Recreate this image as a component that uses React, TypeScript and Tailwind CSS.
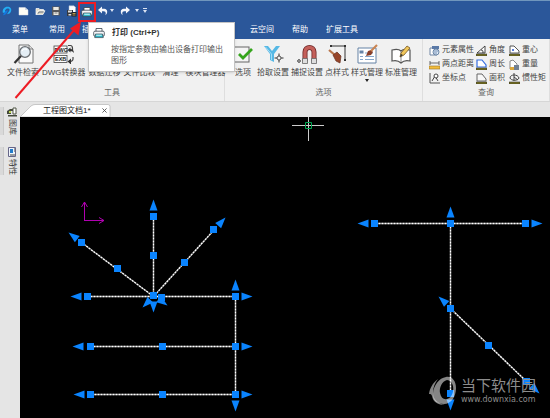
import React from "react";

type Pt = [number, number];

function Print({ className }: { className: string }) {
  return (
    <svg viewBox="0 0 12 12" className={className} aria-hidden="true">
      <path d="M3 5V1.500h6V5" fill="#fff" stroke="#39424c" strokeWidth=".8" />
      <rect x=".7" y="4.200" width="10.600" height="5" rx="1.200" fill="#f5f7fa" stroke="#39424c" strokeWidth=".8" />
      <path d="M2.500 7h7l.8 3.600H1.700z" fill="#2fb5c6" stroke="#39424c" strokeWidth=".7" />
      <path d="M3.200 8.200h5.600" stroke="#dff" strokeWidth="1" />
    </svg>
  );
}

function Undo({ flip = false }: { flip?: boolean }) {
  return (
    <svg viewBox="0 0 10 10" className={flip ? "h-2.5 w-2.5 -scale-x-100" : "h-2.5 w-2.5"} aria-hidden="true">
      <path d="M0 4 4 .6v2.200h2.200c3.600 0 4 4.600 1 6.400 1-2 .6-4-1.400-4H4v2.200z" fill="#f4f6fb" />
    </svg>
  );
}

function Caret() {
  return (
    <svg viewBox="0 0 4 3" className="h-[3px] w-1" aria-hidden="true">
      <path d="M0 0h4L2 3z" fill="#dbe4f3" />
    </svg>
  );
}

function QuickButton({ label, width, children }: { label: string; width: string; children: React.ReactNode }) {
  return (
    <button type="button" aria-label={label} className={`flex h-4 shrink-0 items-center justify-center ${width}`}>
      {children}
    </button>
  );
}

function QuickBar() {
  return (
    <div className="flex h-5 items-center border-t border-[#7096bd]">
      <QuickButton label="CAD" width="w-3.5">
        <svg viewBox="0 0 12 12" className="h-2.5 w-2.5" aria-hidden="true">
          <path d="M1 8C0 3 4 0 8 1c4 1 4 6 1 8L6 10l2-3c2-2 1-4-1-4-3 0-4 3-3 5z" fill="#22aef5" />
          <path d="M1 11c3 0 5-2 6-6L4 6z" fill="#1477dd" />
        </svg>
      </QuickButton>
      <QuickButton label="新建" width="w-[18px]">
        <svg viewBox="0 0 11 10" className="h-2.5 w-[11px]" aria-hidden="true">
          <path d="M1 1.500h6l3 2.600V9H1z" fill="#fffef5" stroke="#d5dbe5" strokeWidth=".5" />
          <path d="M7 1.500v2.600h3" fill="#cfd7e6" />
        </svg>
      </QuickButton>
      <QuickButton label="打开" width="w-4">
        <svg viewBox="0 0 11 10" className="h-2.5 w-[11px]" aria-hidden="true">
          <path d="M1 8.500v-6h3l1 1h3.500v1.400M1 8.500l2-3.800h7L8 8.500z" fill="#dfd9c4" stroke="#fff" strokeWidth=".7" />
          <path d="M3.200 7.500 4 6h4.500" fill="none" stroke="#455778" strokeWidth=".8" />
        </svg>
      </QuickButton>
      <QuickButton label="保存" width="w-4">
        <svg viewBox="0 0 10 10" className="h-2.5 w-2.5" aria-hidden="true">
          <path d="M1 .5h8v9H1z" fill="#57585d" />
          <path d="M2.300 1h5.400v3H2.300zM2.500 6h5v3h-5z" fill="#eceae3" />
          <path d="M3.500 7h3" stroke="#555" strokeWidth=".7" />
        </svg>
      </QuickButton>
      <QuickButton label="另存为" width="w-3.5">
        <svg viewBox="0 0 11 12" className="h-3 w-[11px]" aria-hidden="true">
          <path d="M3 .8h5l1.500 1.500V8H3z" fill="#fff" stroke="#a7b4c8" strokeWidth=".5" />
          <path d="M1 5h6v6H1z" fill="#34373d" />
          <path d="M2 5.500h4v2H2zM2.500 9h3v1.600h-3z" fill="#ddd" />
          <path d="M5.500 7h5v4.500h-5z" fill="#1d2330" />
          <path d="M6.500 8.500h3M6.500 10h3" stroke="#e7b74b" strokeWidth=".8" />
        </svg>
      </QuickButton>
      <button
        type="button"
        aria-label="打印"
        className="mt-0.5 flex h-5 w-[18px] shrink-0 items-center justify-center border-2 border-[#ed1c24]"
      >
        <Print className="h-3 w-3" />
      </button>
      <QuickButton label="撤销" width="w-[13px]"><Undo /></QuickButton>
      <QuickButton label="撤销列表" width="w-1.5"><Caret /></QuickButton>
      <QuickButton label="重做" width="w-5"><Undo flip /></QuickButton>
      <QuickButton label="重做列表" width="w-1"><Caret /></QuickButton>
      <QuickButton label="自定义快速访问" width="w-3">
        <svg viewBox="0 0 4 5" className="h-[5px] w-1" aria-hidden="true">
          <path d="M0 0h4v1H0zM0 2h4L2 5z" fill="#dbe4f3" />
        </svg>
      </QuickButton>
    </div>
  );
}

function MenuBar() {
  return (
    <nav className="flex h-[19px] items-center whitespace-nowrap pl-3 text-white">
      <button type="button" className="mr-1">菜单</button>
      <div className="flex gap-[17px] pl-[17px]">
        <button type="button">常用</button>
        <button type="button">插入</button>
      </div>
      <div className="ml-[152px] flex gap-[18px]">
        <button type="button">云空间</button>
        <button type="button">帮助</button>
        <button type="button">扩展工具</button>
      </div>
    </nav>
  );
}

const searchIcon = (
  <>
    <path d="M6 1h10l4 4v14H6z" fill="#fafafa" stroke="#666" strokeWidth=".9" />
    <path d="M16 1v4h4" fill="#ddd" stroke="#666" strokeWidth=".8" />
    <circle cx="12" cy="8" r="5.300" fill="#e4eef5" stroke="#6b6f73" strokeWidth="1.300" />
    <path d="M9 7c1-2 4-3 5-1" stroke="#fff" strokeWidth="1.200" fill="none" />
    <path d="m8 12-6.500 7" stroke="#333" strokeWidth="2.200" />
  </>
);

const dwgIcon = (
  <>
    <rect x="1" y="2" width="13" height="7" fill="#fff" stroke="#444" strokeWidth=".8" />
    <text x="1.600" y="7.600" fontSize="5.500" fontWeight="700" fill="#222" textAnchor="start">DWG</text>
    <rect x="1" y="11.500" width="13" height="7" fill="#fff" stroke="#444" strokeWidth=".8" />
    <text x="2" y="17" fontSize="5.500" fontWeight="700" fill="#222">EXB</text>
    <path d="M15 1.500h2.500q2 0 2 3V7M20 13v2q0 2.500-4 2.500" stroke="#444" strokeWidth="1.200" fill="none" />
    <path d="m14.500 6 3-2.500V5q3 0 3.500 4-1.500-2-3.500-2v1.500zM14.500 17.500l3.500-3v6z" fill="#333" />
  </>
);

const checkIcon = (
  <>
    <rect x="1" y="3" width="15" height="15" fill="#f4f4f4" stroke="#666" />
    <path d="m6 10 4 4 9-9" fill="none" stroke="#35a51c" strokeWidth="2.800" />
  </>
);

const pickIcon = (
  <>
    <path d="M1 2h4l4 5 4-5h4l-6 8v8l-4-2v-6z" fill="#55b8e5" />
    <path d="m2.500 3 6 7v6" fill="none" stroke="#a3dcf5" />
    <path d="M16 9.500v9M11.500 14h9" stroke="#333" />
    <circle cx="16" cy="14" r="2" fill="#f1f1f1" stroke="#333" strokeWidth=".8" />
  </>
);

const magnetIcon = (
  <>
    <path d="M8 17V8c0-6 9-6 9 0v9" fill="none" stroke="#6f2929" strokeWidth="5" />
    <path d="M8 16V8c0-6 9-6 9 0v8" fill="none" stroke="#c4605a" strokeWidth="3.400" />
    <path d="M5.500 14.500h5v5h-5zM14.500 14.500h5v5h-5z" fill="#dedede" stroke="#666" strokeWidth=".8" />
    <circle cx="2" cy="17" r="1.300" fill="#fff" stroke="#333" />
  </>
);

const pointIcon = (
  <>
    <path d="M4 2h14v14" fill="none" stroke="#333" strokeWidth="1" />
    <path d="M3 1h2v2H3zM17 1h2v2h-2zM17 15h2v2h-2z" fill="#333" />
    <path d="m2 6 7 6" stroke="#b9754a" strokeWidth="2.200" />
    <path d="m6 11 4-3 4 4-1 7-4-2z" fill="#97452a" stroke="#65301f" strokeWidth=".7" />
  </>
);

const styleIcon = (
  <>
    <path d="M1 4h18v15H1z" fill="#fff" stroke="#6482a5" />
    <path d="M2.500 6.500h4v3h-4z" fill="#6785a8" />
    <path d="M3 12.500h3M3 15.500h3M8 9h8M8 12.500h9M8 15.500h9" stroke="#86a7cb" />
    <path d="m9 12 2-5 3-1 2 2-2 3z" fill="#8a402a" />
    <path d="m14 7 6-6" stroke="#c98453" strokeWidth="2.200" />
  </>
);

const bookIcon = (
  <>
    <path d="M1 6c4-1 7-1 9 1 2-2 5-2 9-1v11c-4-1-7 0-9 2-2-2-5-3-9-2z" fill="#fff" stroke="#555" strokeWidth="1.200" />
    <path d="M10 7v11" stroke="#888" />
    <path d="m9 13 1-4 6-7 3 2-6 7z" fill="#f1c75b" stroke="#765520" strokeWidth=".8" />
    <path d="m9 13 1-3 2 1z" fill="#333" />
  </>
);

function Tool({ label, icon, menu = false }: { label: string; icon?: React.ReactNode; menu?: boolean }) {
  return (
    <button type="button" className="flex min-w-6 shrink-0 flex-col items-center whitespace-nowrap">
      <svg viewBox="0 0 21 20" className="h-5 w-[21px]" aria-hidden="true">{icon}</svg>
      <span className="mt-[3px] leading-3">{label}</span>
      {menu && (
        <svg viewBox="0 0 4 3" className="h-[3px] w-1" aria-hidden="true">
          <path d="M0 0h4L2 3z" fill="#222" />
        </svg>
      )}
    </button>
  );
}

const ruler = <path d="M0 9h11v2H0z" fill="#7d751b" stroke="#333" strokeWidth=".6" />;

const queries: { label: string; icon: React.ReactNode }[] = [
  { label: "元素属性", icon: <><path d="M1 3h7v7H1z" fill="#fff" stroke="#7186a4" /><path d="M3 1h7v3H3z" fill="#5a79a7" /><circle cx="7" cy="7" r="3" fill="#dce9f6" stroke="#6b86a7" /><path d="M5 6h4M5 8h3" stroke="#4e6f9b" strokeWidth=".7" /></> },
  { label: "角度", icon: <><path d="M1 8 9 1v7z" fill="#fff" stroke="#333" strokeWidth=".9" /><path d="M5 5c2 0 2 1 2 3" fill="none" stroke="#333" />{ruler}</> },
  { label: "重心", icon: <><path d="M1 8V1h4l5 5v2z" fill="#fff" stroke="#555" /><circle cx="4" cy="5" r="1" fill="#2350cc" />{ruler}</> },
  { label: "两点距离", icon: <><path d="M1 2v4M10 2v4M1 4h9" stroke="#444" strokeWidth=".8" /><path d="M0 7h11v3H0z" fill="#f2bc3b" stroke="#94702a" strokeWidth=".6" /></> },
  { label: "周长", icon: <><path d="M1 8V1h5l4 5v2z" fill="#fff" stroke="#356ee0" strokeWidth="1.200" />{ruler}</> },
  { label: "重量", icon: <><path d="M1 10V2l3-1 4 4v5z" fill="#fff" stroke="#888" /><path d="M5 6h5v5H5z" fill="#728092" /><path d="M1 8h4v3H1z" fill="#daa73c" /></> },
  { label: "坐标点", icon: <><path d="M1 0v10h10" fill="none" stroke="#555" /><path d="M3 8 6 3l3 5" fill="none" stroke="#444" /><circle cx="7" cy="3" r="2" fill="#fff" stroke="#444" /></> },
  { label: "面积", icon: <><path d="M1 8V1h5l4 5v2z" fill="#f7f7f7" stroke="#666" />{ruler}</> },
  { label: "惯性矩", icon: <><path d="M1 5c0-4 8-4 9 0-1 3-8 3-9 0M5 0v8M5 4l4 3" fill="none" stroke="#444" />{ruler}</> },
];

function Group({ title, className, children }: { title: string; className: string; children: React.ReactNode }) {
  return (
    <section className={`flex flex-col justify-between border-r border-[#dedede] pt-[5px] ${className}`}>
      {children}
      <h2 className="text-center leading-4 text-[#666]">{title}</h2>
    </section>
  );
}

function Ribbon() {
  return (
    <div className="flex h-[63px] border-b border-[#d6d6d6] bg-[#f1f1f1] text-[#444]">
      <Group title="工具" className="w-[225px] shrink-0">
        <div className="flex gap-[3px] pl-[7px]">
          <Tool label="文件检索" icon={searchIcon} />
          <Tool label="DWG转换器" icon={dwgIcon} />
          <Tool label="数据迁移" />
          <Tool label="文件比较" />
          <Tool label="清理" />
          <Tool label="模块管理器" />
        </div>
      </Group>
      <Group title="选项" className="w-[198px] shrink-0">
        <div className="flex h-[38px] gap-0.5 pl-1.5">
          <Tool label="选项" icon={checkIcon} />
          <Tool label="拾取设置" icon={pickIcon} />
          <Tool label="捕捉设置" icon={magnetIcon} />
          <Tool label="点样式" icon={pointIcon} />
          <Tool label="样式管理" icon={styleIcon} menu />
          <Tool label="标准管理" icon={bookIcon} />
        </div>
      </Group>
      <Group title="查询" className="min-w-[127px] flex-1">
        <div className="grid grid-cols-[47px_33px_37px] gap-y-0.5 pl-1.5">
          {queries.map((q) => (
            <button key={q.label} type="button" className="flex h-3 items-center gap-0.5 whitespace-nowrap">
              <svg viewBox="0 0 11 11" className="h-[11px] w-[11px] shrink-0" aria-hidden="true">{q.icon}</svg>
              {q.label}
            </button>
          ))}
        </div>
      </Group>
    </div>
  );
}

function Tooltip() {
  return (
    <div role="tooltip" className="absolute left-[88px] top-[22px] h-[50px] w-[147px] border border-[#c4c4c4] bg-white pl-1 pr-1 pt-1 text-[#555] shadow-sm">
      <div className="flex h-3 items-center gap-[7px] font-bold text-[#333]">
        <Print className="h-3 w-3" />
        <span>打印 (Ctrl+P)</span>
      </div>
      <p className="mt-[5px] pl-[18px] leading-[11px]">按指定参数由输出设备打印输出图形</p>
    </div>
  );
}

function TabStrip() {
  return (
    <div className="flex h-[15px] items-end bg-[#e5e5e5] pl-5">
      <div className="relative flex h-[13px] w-[91px] items-center justify-between pl-[23px] pr-1 text-[#222]">
        <svg viewBox="0 0 91 13" className="absolute inset-0 h-full w-full" aria-hidden="true">
          <path d="M0 13 11 2q2-1.500 4-1.500h73q2 0 2 2V13z" fill="#fff" stroke="#b5b5b5" strokeWidth=".7" />
        </svg>
        <button type="button" className="relative whitespace-nowrap">工程图文档1*</button>
        <button type="button" aria-label="关闭" className="relative">
          <svg viewBox="0 0 6 6" className="h-[5px] w-[5px]" aria-hidden="true">
            <path d="m.5.5 5 5m0-5-5 5" stroke="#444" />
          </svg>
        </button>
      </div>
    </div>
  );
}

function SideItem({ label, children }: { label: string; children: React.ReactNode }) {
  return (
    <button type="button" className="flex h-7 w-full items-start">
      <span className="h-full w-1 border-r border-[#cacaca] bg-[#d9d9d9]" />
      <span className="flex flex-1 flex-col items-center gap-0.5">
        <svg viewBox="0 0 10 10" className="h-2.5 w-2.5 shrink-0" aria-hidden="true">{children}</svg>
        <span className="h-4 w-3 whitespace-nowrap leading-3 [text-orientation:sideways] [writing-mode:vertical-rl]">{label}</span>
      </span>
    </button>
  );
}

function SideBar() {
  return (
    <aside className="-mt-2.5 flex w-5 shrink-0 flex-col gap-3 text-[#333]">
      <SideItem label="图库">
        <path d="M0 7V4l3-2h5v2H4v3zM1 8h9v1.500H1z" fill="#454a3c" />
        <path d="M6 1h3v6H6z" fill="#fff" stroke="#4e5545" />
        <path d="M2 4h2v2H2z" fill="#bad64c" />
      </SideItem>
      <SideItem label="特性">
        <path d="M1.500.5h7v9h-7z" fill="#eef4fb" stroke="#668" />
        <path d="M3 2h3v4H3z" fill="#247bc9" />
        <path d="M7 2h1M7 4h1M3 8h5" stroke="#444" />
      </SideItem>
    </aside>
  );
}

const lines: [Pt, Pt][] = [
  [[81, 242], [153, 296]],
  [[153, 216], [153, 296]],
  [[214, 229], [153, 296]],
  [[87, 296], [235, 296]],
  [[90, 346], [235, 346]],
  [[91, 394], [235, 394]],
  [[235, 296], [235, 394]],
  [[375, 223], [526, 223]],
  [[450, 223], [450, 393]],
  [[450, 308], [526, 381]],
];

const grips: Pt[] = [
  [81, 242], [117, 268], [153, 216], [153, 255], [213, 229], [184, 262],
  [87, 296], [153, 295], [161, 297], [235, 296],
  [90, 346], [162, 346], [235, 346], [90, 394], [162, 394], [235, 394],
  [374, 223], [450, 223], [525, 223], [450, 308], [488, 345], [526, 381], [450, 393],
];

// Arrow grips: tip position and heading in degrees, 0 pointing right.
const arrows: [number, number, number][] = [
  [68, 232, 217], [153, 199, 270], [225, 217, 312], [70, 296, 180], [252, 296, 0],
  [235, 279, 270], [72, 346, 180], [252, 346, 0], [73, 394, 180], [252, 394, 0],
  [235, 411, 90], [142, 307, 135], [153, 312, 90], [167, 305, 36],
  [357, 223, 180], [542, 223, 0], [450, 206, 270], [438, 296, 222], [450, 410, 90], [539, 393, 44],
];

function Drawing() {
  return (
    <svg viewBox="20 117 530 301" className="h-[301px] w-[530px]" role="img" aria-label="工程图">
      <g stroke="#666" strokeWidth="1.500">
        {lines.map(([a, b], i) => <line key={i} x1={a[0] + 0.5} y1={a[1] + 0.5} x2={b[0] + 0.5} y2={b[1] + 0.5} />)}
      </g>
      <g stroke="#fff" strokeWidth="1.300" strokeDasharray="2 1">
        {lines.map(([a, b], i) => <line key={i} x1={a[0] + 0.5} y1={a[1] + 0.5} x2={b[0] + 0.5} y2={b[1] + 0.5} />)}
      </g>
      <g fill="#0a84ff">
        {grips.map(([x, y], i) => <rect key={i} x={x - 3} y={y - 3} width="7" height="7" />)}
        {arrows.map(([x, y, r], i) => (
          <path key={i} d="M0 0-11-4V4z" transform={`translate(${x + 0.5} ${y + 0.5}) rotate(${r})`} />
        ))}
      </g>
      <path d="M84.500 221v-19m-3 5 3-5 3 5M84.500 220.500H104m-5-3 5 3-5 3" fill="none" stroke="#b000b0" />
      <path d="M292 125.500h32M308.500 117v24" stroke="#ccc" />
      <path d="M305.500 122.500h6v6h-6z" fill="none" stroke="#00a651" />
    </svg>
  );
}

function Watermark() {
  return (
    <div className="absolute bottom-3 right-3.5 flex items-center gap-1 text-[#8d8d8d]">
      <svg viewBox="0 0 28 30" className="h-[30px] w-7" aria-hidden="true">
        <path
          fillRule="evenodd"
          fill="#fff"
          fillOpacity=".52"
          d="M17 1C23 0 27 5 27 12c0 9-5 16-12 16C8 28 3 24 4 17 5 9 10 2 17 1M18 4C13 5 10 12 11 17c1 5 4 7 7 6 5-1 7-8 6-13-1-4-3-6-6-6"
        />
        <path
          fill="#fff"
          fillOpacity=".52"
          d="M9 3C3 8 1 12 0 18c2 0 2 0 3 2 1 6 6 9 13 9-8-2-12-6-12-12C4 11 6 7 9 3"
        />
      </svg>
      <div className="flex flex-col whitespace-nowrap">
        <span className="text-[15px] leading-[17px]">当下软件园</span>
        <span className="font-['DejaVu_Sans',sans-serif] text-[8px] leading-3">www.downxia.com</span>
      </div>
    </div>
  );
}

export default function App() {
  return (
    <div className="relative flex min-h-screen flex-col overflow-hidden bg-[#e5e5e5] font-['Liberation_Sans','Noto_Sans_CJK_SC',sans-serif] text-[8px] leading-3">
      <header className="bg-[#2b579a]">
        <QuickBar />
        <MenuBar />
      </header>
      <Ribbon />
      <TabStrip />
      <div className="relative flex flex-1">
        <SideBar />
        <main className="relative flex-1 overflow-hidden bg-black">
          <Drawing />
          <Watermark />
        </main>
      </div>
      <Tooltip />
      <svg viewBox="0 0 100 104" className="pointer-events-none absolute left-0 top-0 h-[104px] w-[100px]" aria-hidden="true">
        <path d="M15.500 98 75 29" stroke="#ed1c24" strokeWidth="2" />
        <path d="m81 21.500-2.500 14-8.500-7z" fill="#ed1c24" />
      </svg>
    </div>
  );
}
